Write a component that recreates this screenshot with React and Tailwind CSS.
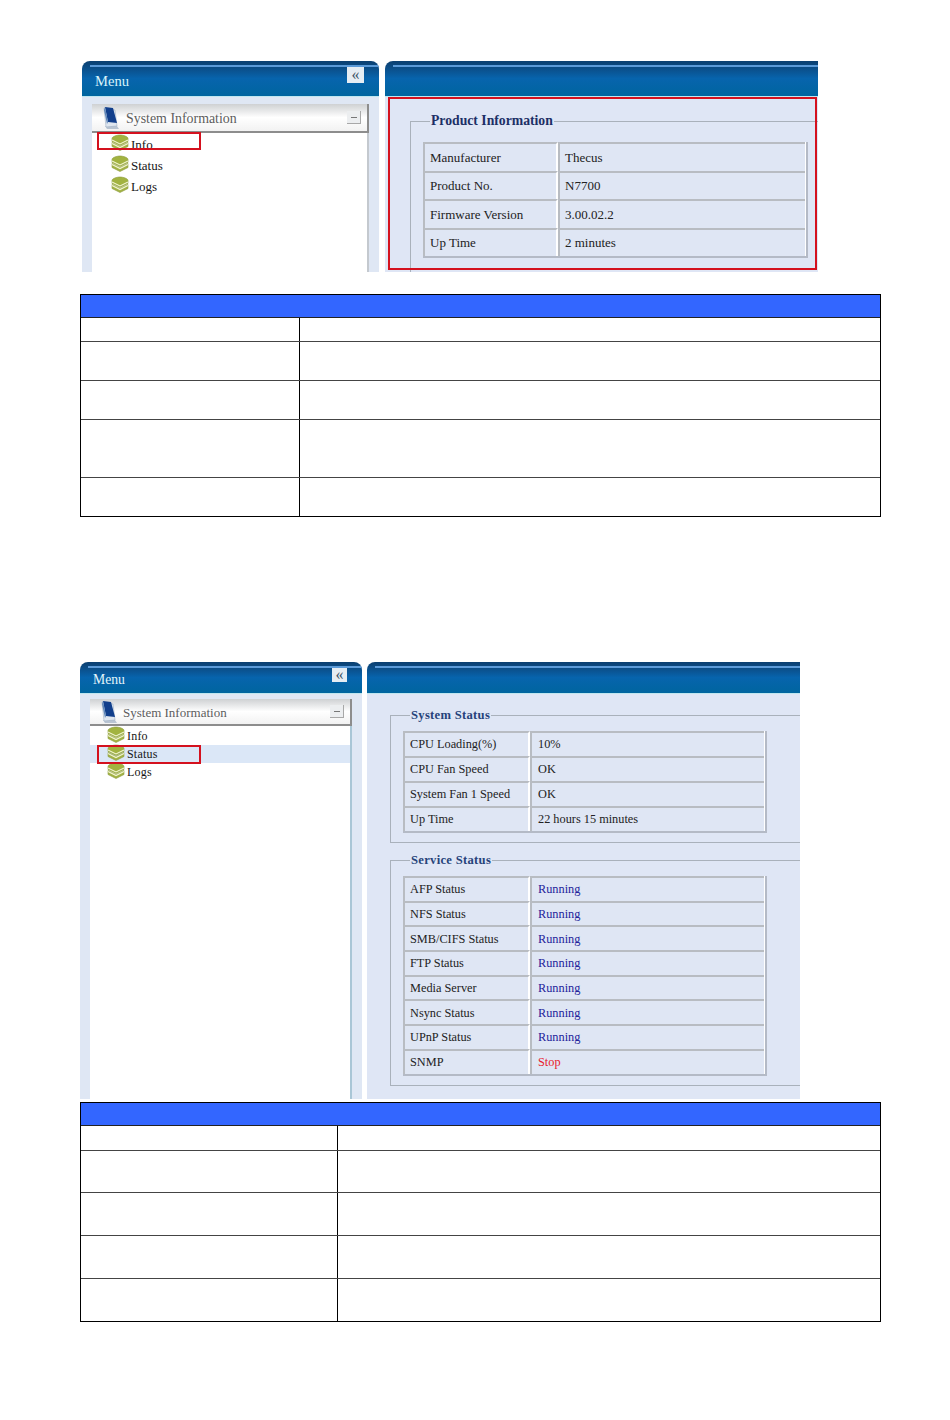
import React from "react";

const productRows = [
  ["Manufacturer", "Thecus"],
  ["Product No.", "N7700"],
  ["Firmware Version", "3.00.02.2"],
  ["Up Time", "2 minutes"],
];

const systemRows = [
  ["CPU Loading(%)", "10%"],
  ["CPU Fan Speed", "OK"],
  ["System Fan 1 Speed", "OK"],
  ["Up Time", "22 hours 15 minutes"],
];

const serviceRows = [
  ["AFP Status", "Running"],
  ["NFS Status", "Running"],
  ["SMB/CIFS Status", "Running"],
  ["FTP Status", "Running"],
  ["Media Server", "Running"],
  ["Nsync Status", "Running"],
  ["UPnP Status", "Running"],
  ["SNMP", "Stop"],
];

const table1 = ["h-[24px]", "h-[39px]", "h-[39px]", "h-[58px]", "h-[38px]"];
const table2 = ["h-[25px]", "h-[42px]", "h-[43px]", "h-[43px]", "h-[42px]"];

const StackIcon = () => (
  <svg width="18" height="18" viewBox="1 1 18 17" className="shrink-0 -mt-[3px] -ml-[1px]">
    <path d="M2 9 L10 13 L18 9 L18 13 L10 17 L2 13 Z" fill="#a3b345" stroke="#8b9a3c" strokeWidth="0.6" />
    <path d="M2 10 L10 14 L18 10" fill="none" stroke="#f2f5d2" strokeWidth="1.3" />
    <path d="M2 5 C2 3 7 1.500 10 1.500 C13 1.500 18 3 18 5 L18 8 L10 12 L2 8 Z" fill="#a2b340" stroke="#8b9a3c" strokeWidth="0.6" />
    <path d="M2 6.500 L10 10.500 L18 6.500" fill="none" stroke="#f2f5d2" strokeWidth="1.1" />
  </svg>
);

const BookIcon = () => (
  <svg width="18" height="24" viewBox="0 0 18 24" className="shrink-0">
    <path d="M3 20 L15 20 L17 23 L5 23 Z" fill="#b9c4d2" />
    <path d="M2 2 L4 21 L15 20 L13 4 Z" fill="#dfe6ef" stroke="#9fb0c4" strokeWidth="0.6" />
    <path d="M3 1 L11 2 L15 17 L6 16 Z" fill="#123f8c" />
    <path d="M3 1 L6 16 L5 18 L2 4 Z" fill="#5f86b8" />
  </svg>
);

const PanelHeader = ({ height, radius, children }) => (
  <div className={`${height} ${radius} shrink-0 bg-gradient-to-b from-[#0b3f70] via-[#0764ad] to-[#00659f] border-b border-[#bfe6ef] relative flex items-center justify-between overflow-hidden`}>
    <div className="absolute left-2 right-0 top-[4px] h-[2px] bg-[#5b9ad8]" />
    {children}
  </div>
);

const Tree = ({ big, selected }) => {
  const items = ["Info", "Status", "Logs"];
  return (
    <div className={big ? "flex flex-col gap-[2px] pl-[20px]" : "flex flex-col pl-[18px]"}>
      {items.map((item) => (
        <div
          key={item}
          className={`flex items-center ${big ? "h-[19px] gap-[2px] text-[13px]" : "h-[18px] gap-[2px] text-[12px] tracking-[0.2px]"} ${selected === item ? "bg-[#dbe7f7] -ml-[18px] pl-[18px]" : ""} text-[#161616]`}
        >
          <StackIcon />
          <span>{item}</span>
        </div>
      ))}
    </div>
  );
};

const MenuPanel = ({ big, selected, width }) => (
  <div className={`${width} shrink-0 flex flex-col`}>
    <PanelHeader height={big ? "h-[36px]" : "h-[32px]"} radius="rounded-t-[8px]">
      <span className={big ? "pl-[13px] pt-[6px] text-[14.6px] text-[#d8f4fa]" : "pl-[13px] pt-[6px] text-[13.7px] text-[#e4f6fb]"}>Menu</span>
      <span className={`${big ? "mr-[15px] mb-[8px] w-[17px] h-[17px]" : "mr-[15px] mb-[5px] w-[15px] h-[14px]"} flex items-center justify-center bg-[#e6edf3] text-[#3c5468] text-[16px] leading-none`}>«</span>
    </PanelHeader>
    <div className={`flex-1 min-h-0 bg-[#dfe7f4] flex flex-col ${big ? "px-[10px] pt-[7px]" : "pl-[10px] pr-[10px] pt-[5px]"}`}>
      <div className={`flex-1 bg-white flex flex-col border-r-2 ${big ? "border-[#c4c9cf]" : "border-[#a9c6d6]"}`}>
        <div className={`${big ? "h-[29px] text-[13.9px]" : "h-[27px] text-[13px]"} shrink-0 -mr-[2px] flex items-center justify-between bg-gradient-to-b from-[#cfd1d3] via-white to-[#f2f2f2] border-b-2 border-r-2 border-[#8d8d8d] pl-[10px] pr-[6px] text-[#5d5d5d]`}>
          <span className={big ? "flex items-center gap-[6px]" : "flex items-center gap-[5px]"}>
            <BookIcon />
            <span className={big ? "pt-[3px]" : "pt-[2px]"}>System Information</span>
          </span>
          <span className="w-[14px] h-[13px] bg-[#eceef0] border-b border-r border-[#a8a8a8] flex items-center justify-center">
            <span className="w-[6px] h-[1px] bg-[#777]" />
          </span>
        </div>
        <div className={big ? "pt-[2px]" : "pt-[1px]"}>
          <Tree big={big} selected={selected} />
        </div>
      </div>
    </div>
  </div>
);

const InfoTable = ({ rows, rowHeight, split, text, valuePad }) => (
  <div className="bg-white border-r-2 border-b-2 border-[#b4bac6] flex flex-col pr-[1px]">
    {rows.map(([label, value]) => {
      const color = value === "Running" ? "text-[#23239b]" : value === "Stop" ? "text-[#e8202c]" : "text-[#222]";
      return (
        <div key={label} className={`flex ${rowHeight} ${text}`}>
          <div className={`${split} shrink-0 bg-[#dfe6f4] border-t-2 border-l-2 border-[#b8bcc2] border-r-2 border-r-white flex items-center pl-[5px] text-[#222]`}>{label}</div>
          <div className={`flex-1 bg-[#dfe6f4] border-t-2 border-l-2 border-[#b8bcc2] flex items-center ${valuePad} ${color}`}>{value}</div>
        </div>
      );
    })}
  </div>
);

const Group = ({ title, children, className, legend }) => (
  <fieldset className={`border border-[#a9b1bb] -mr-[20px] ${className}`}>
    <legend className={`ml-[7px] px-[1px] font-bold ${legend}`}>{title}</legend>
    {children}
  </fieldset>
);

const DocTable = ({ heights, first }) => (
  <div className="w-[801px] border border-black flex flex-col">
    <div className="h-[23px] bg-[#3366ff] border-b border-[#222]" />
    {heights.map((h, i) => (
      <div key={i} className={`${h} flex ${i < heights.length - 1 ? "border-b border-[#444]" : ""}`}>
        <div className={`${first} shrink-0 border-r border-black`} />
        <div className="flex-1" />
      </div>
    ))}
  </div>
);

const RedBox = ({ className }) => <div className={`absolute border-2 border-[#d4111e] ${className}`} />;

export default function App() {
  return (
    <div className="w-[950px] h-[1420px] bg-white overflow-hidden font-['Liberation_Serif',serif]">
      {/* Product information shot */}
      <div className="pt-[61px] pl-[82px]">
        <div className="relative w-[736px] h-[211px] flex gap-[6px]">
          <MenuPanel big width="w-[297px]" />
          <div className="flex-1 min-w-0 flex flex-col overflow-hidden">
            <PanelHeader height="h-[36px]" radius="rounded-tl-[8px]" />
            <div className="flex-1 bg-[#dfe6f5] pl-[25px] pt-[15px] pr-[10px]">
              <Group title="Product Information" legend="text-[#1c2f66] text-[13.7px] leading-[18px]" className="pl-[12px] pb-[20px] mr-[-30px]">
                <div className="w-[385px] pt-[12px]">
                  <InfoTable rows={productRows} rowHeight="h-[28.5px]" split="w-[135px]" text="text-[13px]" valuePad="pl-[5px]" />
                </div>
              </Group>
            </div>
          </div>
          <RedBox className="left-[306px] top-[36px] w-[429px] h-[173px]" />
          <RedBox className="left-[15px] top-[71px] w-[104px] h-[18px]" />
        </div>
      </div>

      <div className="pt-[22px] pl-[80px]">
        <DocTable heights={table1} first="w-[219px]" />
      </div>

      {/* Status shot */}
      <div className="pt-[145px] pl-[80px]">
        <div className="relative w-[720px] h-[437px] flex gap-[5px]">
          <MenuPanel width="w-[282px]" selected="Status" />
          <div className="flex-1 min-w-0 flex flex-col overflow-hidden">
            <PanelHeader height="h-[32px]" radius="rounded-tl-[8px]" />
            <div className="flex-1 bg-[#dfe6f5] pl-[23px] pt-[13px]">
              <Group title="System Status" legend="text-[#26437a] text-[12.6px] leading-[16px] tracking-[0.3px]" className="pl-[12px] pb-[9px]">
                <div className="w-[364px] pt-[8px]">
                  <InfoTable rows={systemRows} rowHeight="h-[25px]" split="w-[127px]" text="text-[12.3px]" valuePad="pl-[6px]" />
                </div>
              </Group>
              <Group title="Service Status" legend="text-[#26437a] text-[12.6px] leading-[16px] tracking-[0.3px]" className="mt-[9px] pl-[12px] pb-[9px]">
                <div className="w-[364px] pt-[8px]">
                  <InfoTable rows={serviceRows} rowHeight="h-[24.7px]" split="w-[127px]" text="text-[12.3px]" valuePad="pl-[6px]" />
                </div>
              </Group>
            </div>
          </div>
          <RedBox className="left-[17px] top-[83px] w-[104px] h-[19px]" />
        </div>
      </div>

      <div className="pt-[3px] pl-[80px]">
        <DocTable heights={table2} first="w-[257px]" />
      </div>
    </div>
  );
}
